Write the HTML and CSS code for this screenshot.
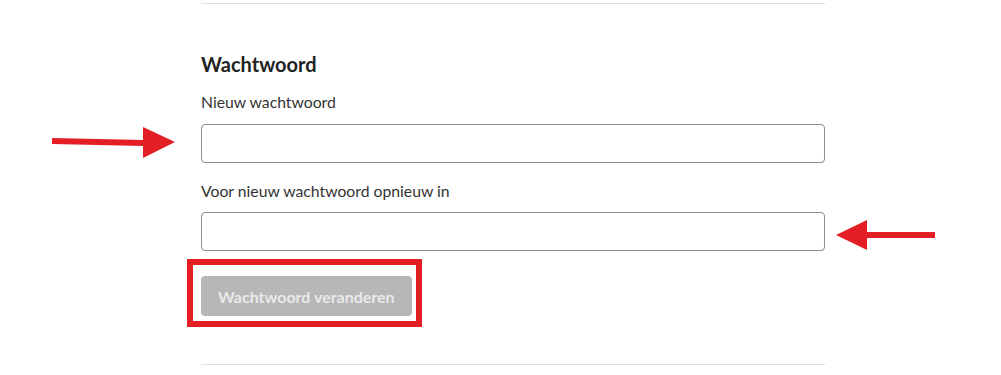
FILE: index.html
```html
<!DOCTYPE html>
<html lang="nl">
<head>
<meta charset="utf-8">
<title>Wachtwoord</title>
<link rel="stylesheet" href="styles.css">
</head>
<body>
<div class="page">
  <div class="panel">
    <section class="section">
      <h2 class="title">Wachtwoord</h2>
      <label class="label" for="pw1">Nieuw wachtwoord</label>
      <input class="field" id="pw1" type="password">
      <label class="label label-second" for="pw2">Voor nieuw wachtwoord opnieuw in</label>
      <input class="field field-second" id="pw2" type="password">
      <button class="btn" type="button" disabled>Wachtwoord veranderen</button>
    </section>
    <div class="highlight-box"></div>
  </div>
  <svg class="arrow arrow-left" width="130" height="34" viewBox="0 0 130 34">
    <polygon points="0,11 92,13 92,19 0,17" fill="#e31e24"/>
    <polygon points="91,0 123,15 91,31" fill="#e31e24"/>
  </svg>
  <svg class="arrow arrow-right" width="104" height="34" viewBox="0 0 104 34">
    <polygon points="0,16 31,1 31,31" fill="#e31e24"/>
    <rect x="30" y="13" width="69" height="6" fill="#e31e24"/>
  </svg>
</div>
</body>
</html>
```

FILE: styles.css
```css
html, body {
  margin: 0;
  padding: 0;
  background: #ffffff;
}

.page {
  position: relative;
  width: 1001px;
  height: 375px;
  overflow: hidden;
  font-family: Lato, "Open Sans", "Liberation Sans", sans-serif;
}

.panel {
  position: relative;
  width: 624px;
  margin-left: 201px;
  padding-top: 3px;
}

.section {
  display: flex;
  flex-direction: column;
  align-items: flex-start;
  border-top: 1px solid #dedede;
  border-bottom: 1px solid #dedede;
  padding: 48px 0 48px;
}

.title {
  margin: 0;
  font-size: 20px;
  line-height: 24px;
  font-weight: 700;
  color: #222222;
}

.label {
  margin-top: 16px;
  font-size: 15.75px;
  line-height: 20px;
  color: #333333;
}

.label-second {
  margin-top: 18px;
}

.field {
  box-sizing: border-box;
  width: 624px;
  height: 39px;
  margin: 12px 0 0;
  border: 1px solid #8c8c8c;
  border-radius: 4px;
  background: #ffffff;
  padding: 0 10px;
  font: inherit;
}

.field-second {
  margin-top: 11px;
}

.btn {
  margin-top: 25px;
  height: 40px;
  padding: 0 17px;
  border: none;
  border-radius: 4px;
  background: #b7b7b8;
  color: #e9e9ea;
  font-family: Lato, "Open Sans", "Liberation Sans", sans-serif;
  font-size: 16px;
  font-weight: 700;
}

.highlight-box {
  position: absolute;
  left: -14px;
  top: 259px;
  width: 223px;
  height: 56px;
  border: 6px solid #e31e24;
}

.arrow {
  position: absolute;
}

.arrow-left {
  left: 52px;
  top: 127px;
}

.arrow-right {
  left: 836px;
  top: 219px;
}
```
